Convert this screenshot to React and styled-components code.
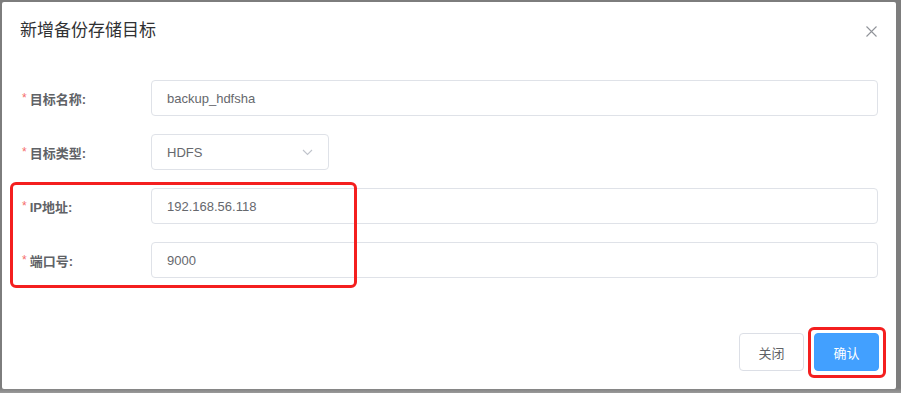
import React from "react";
import styled, { createGlobalStyle } from "styled-components";

//------------------------------- ESTILOS -------------------------

const GlobalStyle = createGlobalStyle`
  html, body {
    margin: 0;
    padding: 0;
    background: #7d7d7d;
    font-family: "Liberation Sans", "Noto Sans CJK SC", sans-serif;
  }
`;

const Overlay = styled.div`
  width: 901px;
  height: 393px;
  padding: 2px 5px 4px 2px;
  box-sizing: border-box;
  background: linear-gradient(#7d7d7d 0, #7d7d7d 388px, #9a9a9a 393px);
`;

const Dialog = styled.div`
  width: 894px;
  height: 387px;
  background: #fff;
  border-radius: 2px;
  display: flex;
  flex-direction: column;
  box-sizing: border-box;
`;

const Header = styled.div`
  height: 58px;
  padding: 20px 19px 0 18px;
  box-sizing: border-box;
  display: flex;
  justify-content: space-between;
  align-items: flex-start;
`;

const Title = styled.span`
  font-size: 17px;
  line-height: 18px;
  color: #303133;
`;

const CloseBtn = styled.button`
  width: 12px;
  height: 12px;
  margin-top: 3px;
  padding: 0;
  border: none;
  background: none;
  display: flex;
  align-items: center;
  justify-content: center;
  cursor: pointer;
`;

const Form = styled.div`
  padding: 20px 18px 0 20px;
`;

const Row = styled.div`
  display: flex;
  align-items: center;
  height: 36px;
  margin-bottom: 18px;
`;

const Label = styled.label`
  width: 129px;
  flex-shrink: 0;
  font-size: 13px;
  font-weight: 600;
  color: #606266;
  display: flex;
  align-items: center;

  &::before {
    content: "*";
    color: #f56c6c;
    font-weight: normal;
    margin-right: 3px;
    font-size: 12px;
  }
`;

const Input = styled.div`
  flex: ${(p) => (p.$width ? "0 0 auto" : "1")};
  width: ${(p) => (p.$width ? p.$width + "px" : "auto")};
  height: 36px;
  box-sizing: border-box;
  border: 1px solid #dfe2e8;
  border-radius: 4px;
  padding: 0 15px;
  display: flex;
  align-items: center;
  justify-content: space-between;
  font-size: 13px;
  color: #66686d;
`;

const Highlight = styled.div`
  position: relative;

  &::after {
    content: "";
    position: absolute;
    top: ${(p) => p.$top}px;
    left: ${(p) => p.$left}px;
    width: ${(p) => p.$w}px;
    height: ${(p) => p.$h}px;
    box-sizing: border-box;
    border: 3px solid #f41f1f;
    border-radius: 6px;
    pointer-events: none;
  }
`;

const Footer = styled.div`
  margin-top: auto;
  padding: 0 17px 18px 0;
  display: flex;
  justify-content: flex-end;
  gap: 10px;
`;

const Button = styled.button`
  width: 65px;
  height: 38px;
  box-sizing: border-box;
  border-radius: 4px;
  font-family: inherit;
  font-size: 13px;
  border: 1px solid ${(p) => (p.$primary ? "#409eff" : "#dcdfe6")};
  background: ${(p) => (p.$primary ? "#42a0ff" : "#fff")};
  color: ${(p) => (p.$primary ? "#fff" : "#606266")};
  cursor: pointer;
`;

//-------------------------------------------------------------------

const fields = [
  { label: "目标名称:", value: "backup_hdfsha" },
  { label: "目标类型:", value: "HDFS", select: true },
];

const netFields = [
  { label: "IP地址:", value: "192.168.56.118" },
  { label: "端口号:", value: "9000" },
];

function Chevron() {
  return (
    <svg width="11" height="7" viewBox="0 0 11 7">
      <path d="M1 1l4.5 4.5L10 1" fill="none" stroke="#c0c4cc" strokeWidth="1.1" />
    </svg>
  );
}

function FormRow({ label, value, select }) {
  return (
    <Row>
      <Label>{label}</Label>
      <Input $width={select ? 178 : null}>
        <span>{value}</span>
        {select && <Chevron />}
      </Input>
    </Row>
  );
}

export default function App() {
  return (
    <Overlay>
      <GlobalStyle />
      <Dialog>
        <Header>
          <Title>新增备份存储目标</Title>
          <CloseBtn aria-label="close">
            <svg width="11" height="11" viewBox="0 0 11 11">
              <path d="M0.5 0.5l10 10M10.5 0.5l-10 10" stroke="#909399" strokeWidth="1.1" />
            </svg>
          </CloseBtn>
        </Header>
        <Form>
          {fields.map((f) => (
            <FormRow key={f.label} {...f} />
          ))}
          <Highlight $top={-6} $left={-12} $w={347} $h={106}>
            {netFields.map((f) => (
              <FormRow key={f.label} {...f} />
            ))}
          </Highlight>
        </Form>
        <Footer>
          <Button>关闭</Button>
          <Highlight $top={-6} $left={-6} $w={78} $h={51}>
            <Button $primary>确认</Button>
          </Highlight>
        </Footer>
      </Dialog>
    </Overlay>
  );
}
